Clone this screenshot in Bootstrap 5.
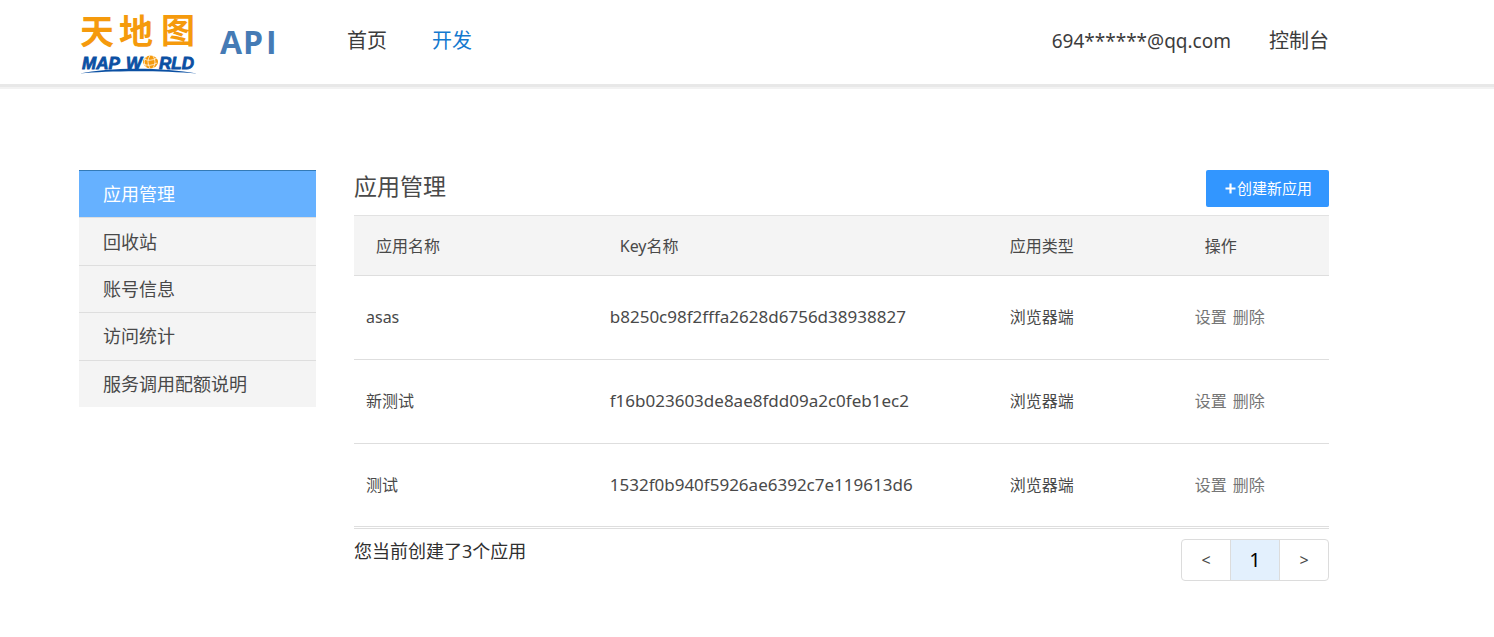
<!DOCTYPE html>
<html lang="zh-CN">
<head>
<meta charset="utf-8">
<meta name="viewport" content="width=device-width, initial-scale=1">
<title>应用管理 - 天地图API</title>
<link href="https://cdn.jsdelivr.net/npm/bootstrap@5.3.0/dist/css/bootstrap.min.css" rel="stylesheet">
<style>
  body { font-family: "Noto Sans", "Noto Sans CJK SC", sans-serif; color: #494949; font-size: 16px; line-height: 24px; }
  a { color: inherit; text-decoration: none; }
  .page-gutter { padding-left: 79px; padding-right: 165px; }
  .site-header { height: 84px; box-shadow: 0 3px 0 #e8e8e8, 0 5px 0 #f2f2f2; }
  .site-header .nav { padding-bottom: 2px; }
  .site-header .nav-link { color: #3c3c3c; font-size: 20px; line-height: 30px; padding: 0; }
  .site-header .nav-link.active { color: #1479cf; }
  .site-header .nav-link.account-link { font-size: 19px; }
  .site-header .main-links { margin-left: 71px; gap: 45px; }
  .site-header .user-links { gap: 38px; }
  .main-area { padding-top: 86px; gap: 38px; }
  .side-menu { flex: 0 0 237px; grid-auto-rows: 1fr; min-height: 237px; }
  .side-menu .list-group-item { display: flex; align-items: center; padding: 0 24px; border: 0; border-top: 1px solid #dedede; background: #f4f4f4; color: #494949; font-size: 18px; line-height: 24px; }
  .side-menu .list-group-item.active { margin: 0; border-color: #337ab7; background: #66b1ff; color: #fff; }
  .panel-title { font-size: 23px; line-height: 32px; font-weight: 400; }
  .panel-bar { height: 45px; }
  .btn-create { background: #3296ff; color: #fff; border: 0; border-radius: 2px; font-size: 15px; line-height: 21px; padding: 8px 17px 8px 19px; gap: 1px; }
  .btn-create:hover { background: #1f87f5; color: #fff; }
  .table-wrap { border-top: 1px solid #e2e2e2; border-bottom: 1px solid #dedede; padding-bottom: 1px; }
  .app-table { table-layout: fixed; color: #494949; border-color: #dedede; }
  .app-table > thead > tr > th { background: #f4f4f4; font-weight: 400; padding: 18px 22px 17px; }
  .app-table > tbody > tr > td { padding: 29px 12px 30px; color: inherit; }
  .app-table > tbody > tr:last-child > td { padding-bottom: 29px; }
  .app-table > tbody > tr > td.key-cell { font-size: 17px; }
  .app-table > tbody > tr > td.type-cell { padding-left: 22px; }
  .app-table .row-actions { color: #757575; gap: 6px; }
  .panel-foot { margin-top: 10px; }
  .summary { font-size: 18px; line-height: 24px; color: #303030; }
  .pager .page-link { width: 50px; height: 42px; padding: 0; line-height: 40px; text-align: center; color: #494949; border-color: #dcdcdc; background: #fff; }
  .pager .page-item:first-child .page-link { border-radius: 4px 0 0 4px; }
  .pager .page-item:last-child .page-link { border-radius: 0 4px 4px 0; }
  .pager .active .page-link { background: #e3f0fd; color: #000; font-size: 20px; }
</style>
</head>
<body>
<header class="site-header page-gutter d-flex align-items-center">
  <a href="#" aria-label="天地图 API" class="d-block">
    <svg width="197" height="84" viewBox="79 0 197 84" class="d-block">
      <g font-family="'Noto Sans CJK SC', sans-serif" font-weight="700" font-size="34" fill="#f59a0c">
        <text x="80" y="44">天</text><text x="119" y="44">地</text><text x="161" y="43">图</text>
      </g>
      <g font-family="'Liberation Sans', sans-serif" font-weight="700" font-style="italic" font-size="17" fill="#0b50a3" stroke="#0b50a3" stroke-width="0.8">
        <text x="82" y="69">MAP</text><text x="126" y="69">W</text><text x="159" y="69">RLD</text>
      </g>
      <ellipse cx="150.500" cy="62" rx="7.500" ry="6.500" fill="#f59a0c"/>
      <path d="M144 59q6 3 13-1M143 64q7 3 14-1M150 55.500q-4 6 0 13M147 56q-5 5-1 11M153 56q4 6 0 12" fill="none" stroke="#fff" stroke-width="0.7"/>
      <path d="M80 73.500C108 67 164 67 197 73.500C164 70.500 108 70.500 80 73.500Z" fill="#0b50a3"/>
      <g font-family="'Open Sans', sans-serif" font-weight="700" font-size="32" fill="#457bb5">
        <text x="220" y="54">A</text><text x="243" y="54">P</text><text x="266" y="54">I</text>
      </g>
    </svg>
  </a>
  <nav class="nav main-links">
    <a class="nav-link" href="#">首页</a>
    <a class="nav-link active" href="#" aria-current="page">开发</a>
  </nav>
  <nav class="nav user-links ms-auto">
    <a class="nav-link account-link" href="#">694******@qq.com</a>
    <a class="nav-link" href="#">控制台</a>
  </nav>
</header>

<div class="main-area page-gutter d-flex align-items-start">
  <nav class="side-menu list-group list-group-flush rounded-0 d-grid">
    <a href="#" class="list-group-item active" aria-current="page">应用管理</a>
    <a href="#" class="list-group-item">回收站</a>
    <a href="#" class="list-group-item">账号信息</a>
    <a href="#" class="list-group-item">访问统计</a>
    <a href="#" class="list-group-item">服务调用配额说明</a>
  </nav>

  <main class="flex-grow-1">
    <div class="panel-bar d-flex justify-content-between align-items-start">
      <h1 class="panel-title m-0">应用管理</h1>
      <button type="button" class="btn btn-create d-flex align-items-center">
        <svg width="11" height="11" viewBox="0 0 11 11" aria-hidden="true"><path d="M5.500 0.500v10M0.500 5.500h10" stroke="#fff" stroke-width="2.200"/></svg>创建新应用
      </button>
    </div>
    <div class="table-wrap">
      <table class="table app-table mb-0">
        <colgroup><col style="width:25%"><col style="width:40%"><col style="width:20%"><col style="width:15%"></colgroup>
        <thead>
          <tr><th scope="col">应用名称</th><th scope="col">Key名称</th><th scope="col">应用类型</th><th scope="col">操作</th></tr>
        </thead>
        <tbody>
          <tr><td>asas</td><td class="key-cell">b8250c98f2fffa2628d6756d38938827</td><td class="type-cell">浏览器端</td><td><div class="row-actions d-flex"><a href="#">设置</a><a href="#">删除</a></div></td></tr>
          <tr><td>新测试</td><td class="key-cell">f16b023603de8ae8fdd09a2c0feb1ec2</td><td class="type-cell">浏览器端</td><td><div class="row-actions d-flex"><a href="#">设置</a><a href="#">删除</a></div></td></tr>
          <tr><td>测试</td><td class="key-cell">1532f0b940f5926ae6392c7e119613d6</td><td class="type-cell">浏览器端</td><td><div class="row-actions d-flex"><a href="#">设置</a><a href="#">删除</a></div></td></tr>
        </tbody>
      </table>
    </div>
    <div class="panel-foot d-flex justify-content-between align-items-start">
      <p class="summary m-0">您当前创建了3个应用</p>
      <nav aria-label="分页">
        <ul class="pagination pager mb-0">
          <li class="page-item"><a class="page-link" href="#" aria-label="上一页">&lt;</a></li>
          <li class="page-item active" aria-current="page"><a class="page-link" href="#">1</a></li>
          <li class="page-item"><a class="page-link" href="#" aria-label="下一页">&gt;</a></li>
        </ul>
      </nav>
    </div>
  </main>
</div>
<script src="https://cdn.jsdelivr.net/npm/bootstrap@5.3.0/dist/js/bootstrap.bundle.min.js"></script>
</body>
</html>
